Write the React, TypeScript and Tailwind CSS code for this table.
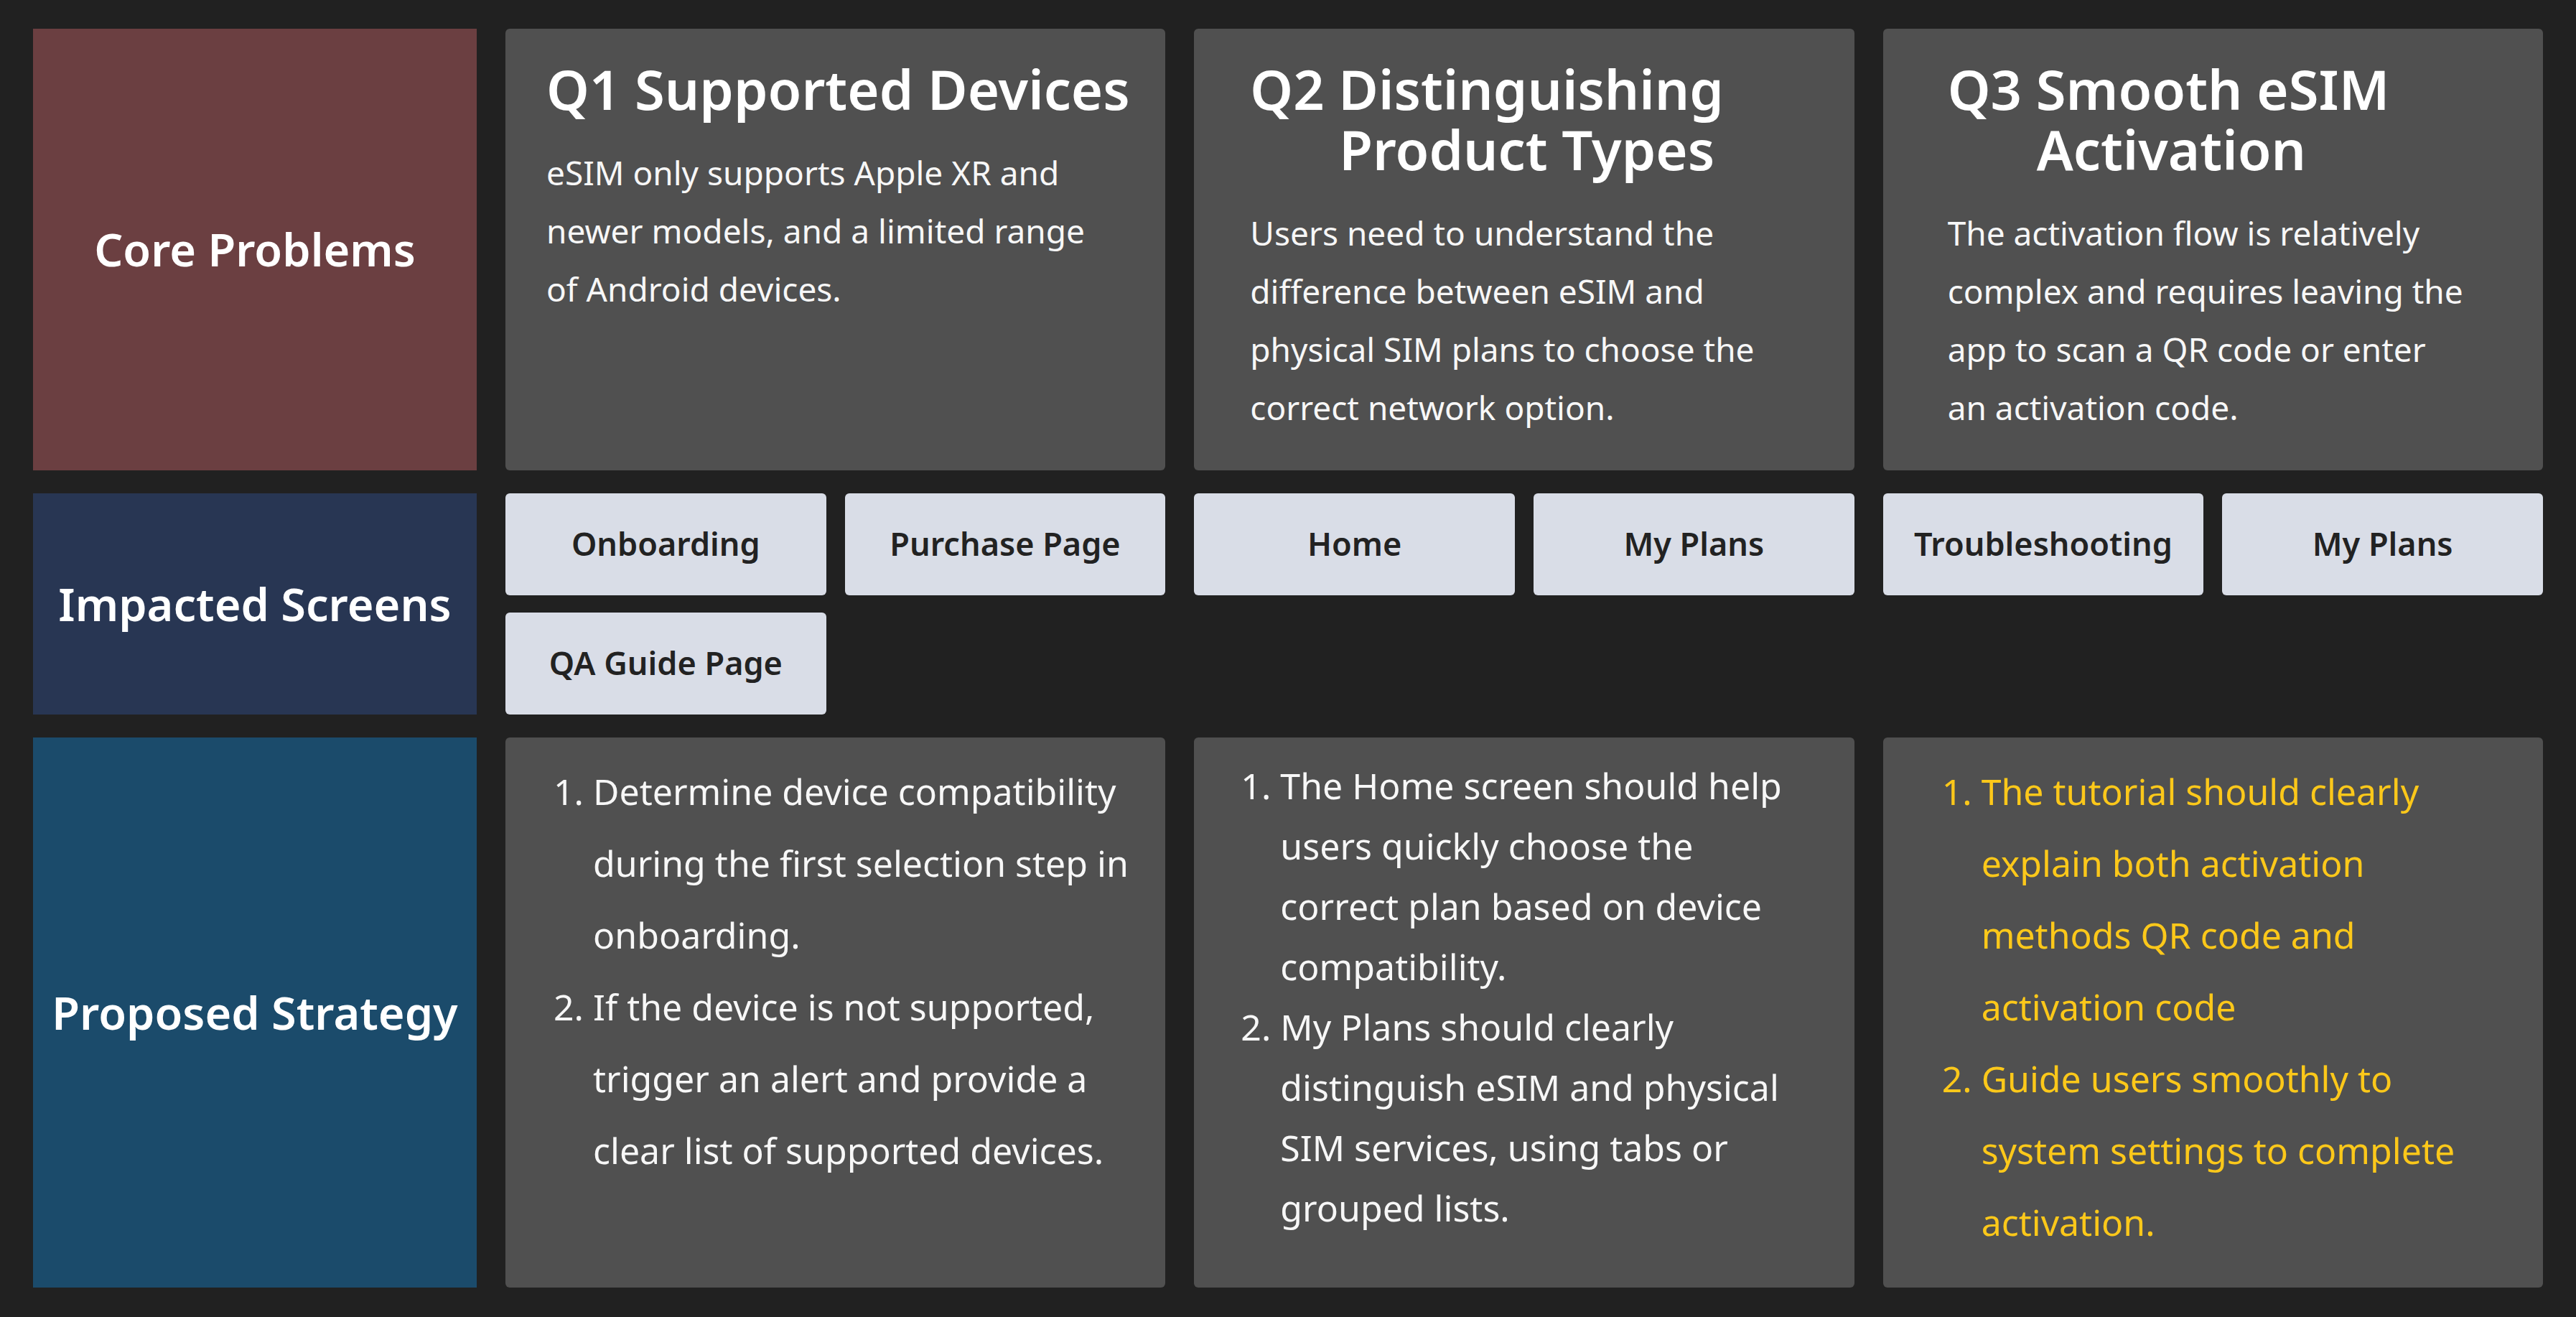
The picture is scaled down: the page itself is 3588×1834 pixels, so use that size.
const rowLabels = {
  core: "Core Problems",
  screens: "Impacted Screens",
  strategy: "Proposed Strategy",
};

const problems = [
  {
    pad: "pl-[57px]",
    title: [{ text: "Q1 Supported Devices", indent: "" }],
    body: ["eSIM only supports Apple XR and", "newer models, and a limited range", "of Android devices."],
  },
  {
    pad: "pl-[78px]",
    title: [
      { text: "Q2 Distinguishing", indent: "" },
      { text: "Product Types", indent: "pl-[124px]" },
    ],
    body: [
      "Users need to understand the",
      "difference between eSIM and",
      "physical SIM plans to choose the",
      "correct network option.",
    ],
  },
  {
    pad: "pl-[90px]",
    title: [
      { text: "Q3 Smooth eSIM", indent: "" },
      { text: "Activation", indent: "pl-[124px]" },
    ],
    body: [
      "The activation flow is relatively",
      "complex and requires leaving the",
      "app to scan a QR code or enter",
      "an activation code.",
    ],
  },
];

const screens = [
  ["Onboarding", "Purchase Page", "QA Guide Page"],
  ["Home", "My Plans"],
  ["Troubleshooting", "My Plans"],
];

const strategies = [
  {
    pad: "pl-[122px]",
    tone: "text-[#f7f7f7] leading-[100px]",
    items: [
      ["Determine device compatibility", "during the first selection step in", "onboarding."],
      ["If the device is not supported,", "trigger an alert and provide a", "clear list of supported devices."],
    ],
  },
  {
    pad: "pl-[120px]",
    tone: "text-[#f7f7f7] leading-[84px]",
    items: [
      ["The Home screen should help", "users quickly choose the", "correct plan based on device", "compatibility."],
      ["My Plans should clearly", "distinguish eSIM and physical", "SIM services, using tabs or", "grouped lists."],
    ],
  },
  {
    pad: "pl-[137px]",
    tone: "text-[#fcc81a] leading-[100px]",
    items: [
      ["The tutorial should clearly", "explain both activation", "methods QR code and", "activation code"],
      ["Guide users smoothly to", "system settings to complete", "activation."],
    ],
  },
];

const Lines = ({ lines }: { lines: string[] }) => (
  <>
    {lines.map((line, i) => (
      <span key={i} className="block whitespace-nowrap">
        {line}
      </span>
    ))}
  </>
);

const RowLabel = ({ text, bg }: { text: string; bg: string }) => (
  <div className={`flex items-center justify-center ${bg}`}>
    <span className="text-[63px] font-semibold text-white whitespace-nowrap">{text}</span>
  </div>
);

export default function App() {
  return (
    <div className="min-h-screen bg-[#212121] px-[46px] pt-[40px] pb-[40px] font-['Noto_Sans','Open_Sans',sans-serif]">
      <div className="grid grid-cols-[618px_1fr_1fr_1fr] grid-rows-[615px_308px_766px] gap-x-[40px] gap-y-[32px]">
        {/* row 1 */}
        <RowLabel text={rowLabels.core} bg="bg-[#6b3f41]" />
        {problems.map((p, i) => (
          <div key={i} className={`rounded-md bg-[#505050] pt-[42px] text-[#f7f7f7] ${p.pad}`}>
            <h2 className="text-[76px] font-semibold leading-[84px] text-white">
              {p.title.map((t, j) => (
                <span key={j} className={`block whitespace-nowrap ${t.indent}`}>
                  {t.text}
                </span>
              ))}
            </h2>
            <p className="mt-[34px] text-[46px] leading-[81px]">
              <Lines lines={p.body} />
            </p>
          </div>
        ))}

        {/* row 2 */}
        <RowLabel text={rowLabels.screens} bg="bg-[#283653]" />
        {screens.map((group, i) => (
          <div key={i} className="grid grid-cols-2 content-start gap-x-[26px] gap-y-[24px]">
            {group.map((name, j) => (
              <div
                key={j}
                className="flex h-[142px] items-center justify-center rounded-md bg-[#d9dde7] pb-[2px] text-[45px] font-semibold text-[#222222]"
              >
                {name}
              </div>
            ))}
          </div>
        ))}

        {/* row 3 */}
        <RowLabel text={rowLabels.strategy} bg="bg-[#1b4b6b]" />
        {strategies.map((s, i) => (
          <div key={i} className={`rounded-md bg-[#505050] pt-[25px] ${s.pad}`}>
            <ol className={`list-decimal text-[50px] ${s.tone}`}>
              {s.items.map((item, j) => (
                <li key={j}>
                  <Lines lines={item} />
                </li>
              ))}
            </ol>
          </div>
        ))}
      </div>
    </div>
  );
}
